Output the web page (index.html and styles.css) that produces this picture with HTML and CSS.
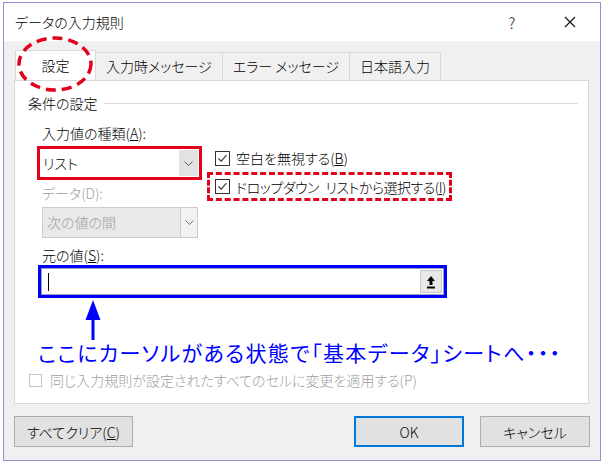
FILE: index.html
```html
<!DOCTYPE html>
<html lang="ja">
<head>
    <meta charset="utf-8">
    <title>データの入力規則</title>
    <link rel="stylesheet" href="styles.css">
</head>
<body>
    <div class="dialog">
        <div class="titlebar">
            <span class="title">データの入力規則</span>
            <span class="help">?</span>
            <span class="close">
                <svg width="12" height="12" viewBox="0 0 12 12"><path d="M1 1L11 11M11 1L1 11" stroke="#111" stroke-width="1.1" fill="none"/></svg>
            </span>
        </div>

        <div class="tabs">
            <div class="tab active">設定
                <svg class="circle-mark" width="80" height="60" viewBox="0 0 80 60"><ellipse cx="40" cy="30" rx="36" ry="26" fill="none" stroke="#e3001b" stroke-width="3.5" stroke-dasharray="10 6"/></svg>
            </div>
            <div class="tab">入力時メッセージ</div>
            <div class="tab">エラー メッセージ</div>
            <div class="tab">日本語入力</div>
        </div>

        <div class="panel">
            <div class="group-title"><span>条件の設定</span><i class="group-line"></i></div>
            <div class="group">
                <div class="label">入力値の種類(<u>A</u>):</div>
                <div class="type-row">
                    <div class="type-col">
                        <div class="mark-red">
                            <div class="combo">
                                <span class="combo-text">リスト</span>
                                <span class="combo-btn"><svg width="9" height="5" viewBox="0 0 9 5"><path d="M0.5 0.5L4.5 4.5L8.5 0.5" stroke="#555" fill="none"/></svg></span>
                            </div>
                        </div>
                        <div class="label disabled">データ(D):</div>
                        <div class="combo combo-disabled">
                            <span class="combo-text">次の値の間</span>
                            <span class="combo-btn"><svg width="9" height="5" viewBox="0 0 9 5"><path d="M0.5 0.5L4.5 4.5L8.5 0.5" stroke="#777" fill="none"/></svg></span>
                        </div>
                    </div>
                    <div class="options">
                        <label class="check">
                            <span class="box"><svg width="13" height="13" viewBox="0 0 13 13"><path d="M2.5 6.5L5.2 9.2L10.5 3.2" stroke="#333" stroke-width="1.1" fill="none"/></svg></span>
                            空白を無視する(<u>B</u>)
                        </label>
                        <div class="mark-dash">
                            <label class="check">
                                <span class="box"><svg width="13" height="13" viewBox="0 0 13 13"><path d="M2.5 6.5L5.2 9.2L10.5 3.2" stroke="#333" stroke-width="1.1" fill="none"/></svg></span>
                                ドロップダウン リストから選択する(<u>I</u>)
                            </label>
                        </div>
                    </div>
                </div>

                <div class="label source-label">元の値(<u>S</u>):</div>
                <div class="mark-blue">
                    <div class="source-input">
                        <span class="caret"></span>
                        <span class="ref-btn">
                            <svg width="10" height="14" viewBox="0 0 10 14"><path d="M5 1L9 6H6.5V10H3.5V6H1Z" fill="#000"/><rect x="1" y="11.5" width="8" height="2" fill="#000"/></svg>
                        </span>
                    </div>
                </div>
                <svg class="arrow-mark" width="20" height="42" viewBox="0 0 20 42"><polygon points="10,2 2.5,22 17.5,22" fill="#0000ff"/><rect x="8.5" y="20" width="3" height="22" fill="#0000ff"/></svg>
                <p class="note">ここにカーソルがある状態で「基本データ」シートへ・・・</p>
            </div>
            <label class="check check-disabled"><span class="box"></span>同じ入力規則が設定されたすべてのセルに変更を適用する(P)</label>
        </div>

        <div class="buttons">
            <button class="btn">すべてクリア(<u>C</u>)</button>
            <button class="btn btn-default">OK</button>
            <button class="btn">キャンセル</button>
        </div>
    </div>
</body>
</html>
```

FILE: styles.css
```css
body{
    margin: 0;
    background: #fff;
    font-family: "Noto Sans CJK JP", sans-serif;
    font-size: 14px;
    font-weight: 300;
    color: #000;
    font-feature-settings: "palt";
}

.dialog{
    position: relative;
    margin: 2px 0 0 3px;
    width: 596px;
    height: 457px;
    border: 1px solid #8e93cc;
    background: #f0f0f0;
}

.titlebar{
    display: flex;
    align-items: center;
    height: 38px;
    padding-left: 11px;
    background: #fff;
}

.title{
    flex: 1;
}

.help{
    width: 20px;
    text-align: center;
    font-size: 15px;
}

.close{
    display: flex;
    justify-content: center;
    width: 20px;
    margin: 0 20px 0 38px;
}

/* tabs */
.tabs{
    display: flex;
    align-items: flex-end;
    height: 30px;
    padding: 9px 0 0 11px;
}

.tab{
    height: 28px;
    line-height: 27px;
    padding: 0 10px;
    margin-left: -1px;
    border: 1px solid #d9d9d9;
    border-bottom: none;
    box-sizing: border-box;
    text-align: center;
}

.tab.active{
    position: relative;
    height: 30px;
    line-height: 29px;
    min-width: 81px;
    margin-left: 0;
    background: #fff;
    z-index: 1;
}

.circle-mark{
    position: absolute;
    left: -1px;
    top: -17px;
}

.panel{
    position: relative;
    height: 324px;
    margin: 0 11px 0 10px;
    border: 1px solid #d9d9d9;
    box-sizing: border-box;
    background: #fff;
}

.group-title{
    display: flex;
    align-items: center;
    height: 20px;
    margin: 12px 10px 0 13px;
}

.group-line{
    flex: 1;
    height: 1px;
    margin-left: 6px;
    background: #dcdcdc;
}

.group{
    padding-left: 25px;
}

.label{
    line-height: 20px;
    margin-top: 10px;
    padding-left: 2px;
}

.label.disabled{
    margin-top: 3px;
    color: #a0a0a0;
}

.type-row{
    display: flex;
    margin-top: 3px;
}

.mark-red{
    margin-left: -3px;
    border: 3px solid #e3001b;
}

.combo{
    display: flex;
    width: 159px;
    height: 28px;
    background: #fff;
    box-sizing: border-box;
}

.combo-text{
    flex: 1;
    line-height: 28px;
    padding-left: 3px;
}

.combo-btn{
    display: flex;
    align-items: center;
    justify-content: center;
    width: 19px;
    margin: 1px;
    background: #e2e2e2;
}

.combo-disabled{
    width: 156px;
    height: 31px;
    margin: 4px 0 0 2px;
    border: 1px solid #cccccc;
    background: #e9e9e9;
    color: #a0a0a0;
}

.combo-disabled .combo-text{
    line-height: 29px;
    padding-left: 4px;
}

.combo-disabled .combo-btn{
    width: 16px;
    margin: 0;
    border-left: 1px solid #cccccc;
    background: #f2f2f2;
}

/* check boxes */
.options{
    margin-left: 5px;
    padding-top: 2px;
}

.check{
    display: flex;
    align-items: center;
    height: 20px;
    padding-left: 8px;
}

.box{
    display: flex;
    align-items: center;
    justify-content: center;
    width: 15px;
    height: 15px;
    margin-right: 6px;
    border: 1px solid #333;
    box-sizing: border-box;
    background: #fff;
}

.mark-dash{
    margin-top: 4px;
    padding-right: 3px;
    border: 3px dashed #e3001b;
}

.mark-dash .check{
    height: 23px;
    padding-left: 5px;
    letter-spacing: -0.5px;
    word-spacing: 4px;
}

.source-label{
    margin-top: 7px;
}

.mark-blue{
    width: 403px;
    margin-left: -2px;
    border: 3px solid #0000ff;
}

.source-input{
    display: flex;
    align-items: center;
    height: 27px;
    border: 1px solid #9aa0b8;
    box-sizing: border-box;
    background: #fff;
}

.caret{
    width: 1px;
    height: 18px;
    margin-left: 6px;
    background: #000;
}

.ref-btn{
    display: flex;
    align-items: center;
    justify-content: center;
    width: 22px;
    height: 23px;
    margin: 0 1px 0 auto;
    border: 1px solid #c8c8c8;
    box-sizing: border-box;
    background: #e8e8e8;
}

.arrow-mark{
    display: block;
    margin-left: 43px;
}

.note{
    margin: 0 0 0 -2px;
    font-size: 21px;
    font-weight: 400;
    line-height: 24px;
    letter-spacing: 1.4px;
    color: #0000ff;
}

.check-disabled{
    margin-top: 6px;
    padding-left: 14px;
    color: #a0a0a0;
}

.check-disabled .box{
    width: 13px;
    height: 13px;
    margin-right: 8px;
    border-color: #c4c4c4;
}

/* buttons */
.buttons{
    display: flex;
    margin-top: 12px;
    padding: 0 10px;
}

.btn{
    min-width: 110px;
    height: 31px;
    padding: 0 12px;
    border: 1px solid #adadad;
    background: #e1e1e1;
    font: inherit;
    color: #000;
}

.btn-default{
    margin-left: auto;
    margin-right: 16px;
    border: 2px solid #0078d7;
}
```
